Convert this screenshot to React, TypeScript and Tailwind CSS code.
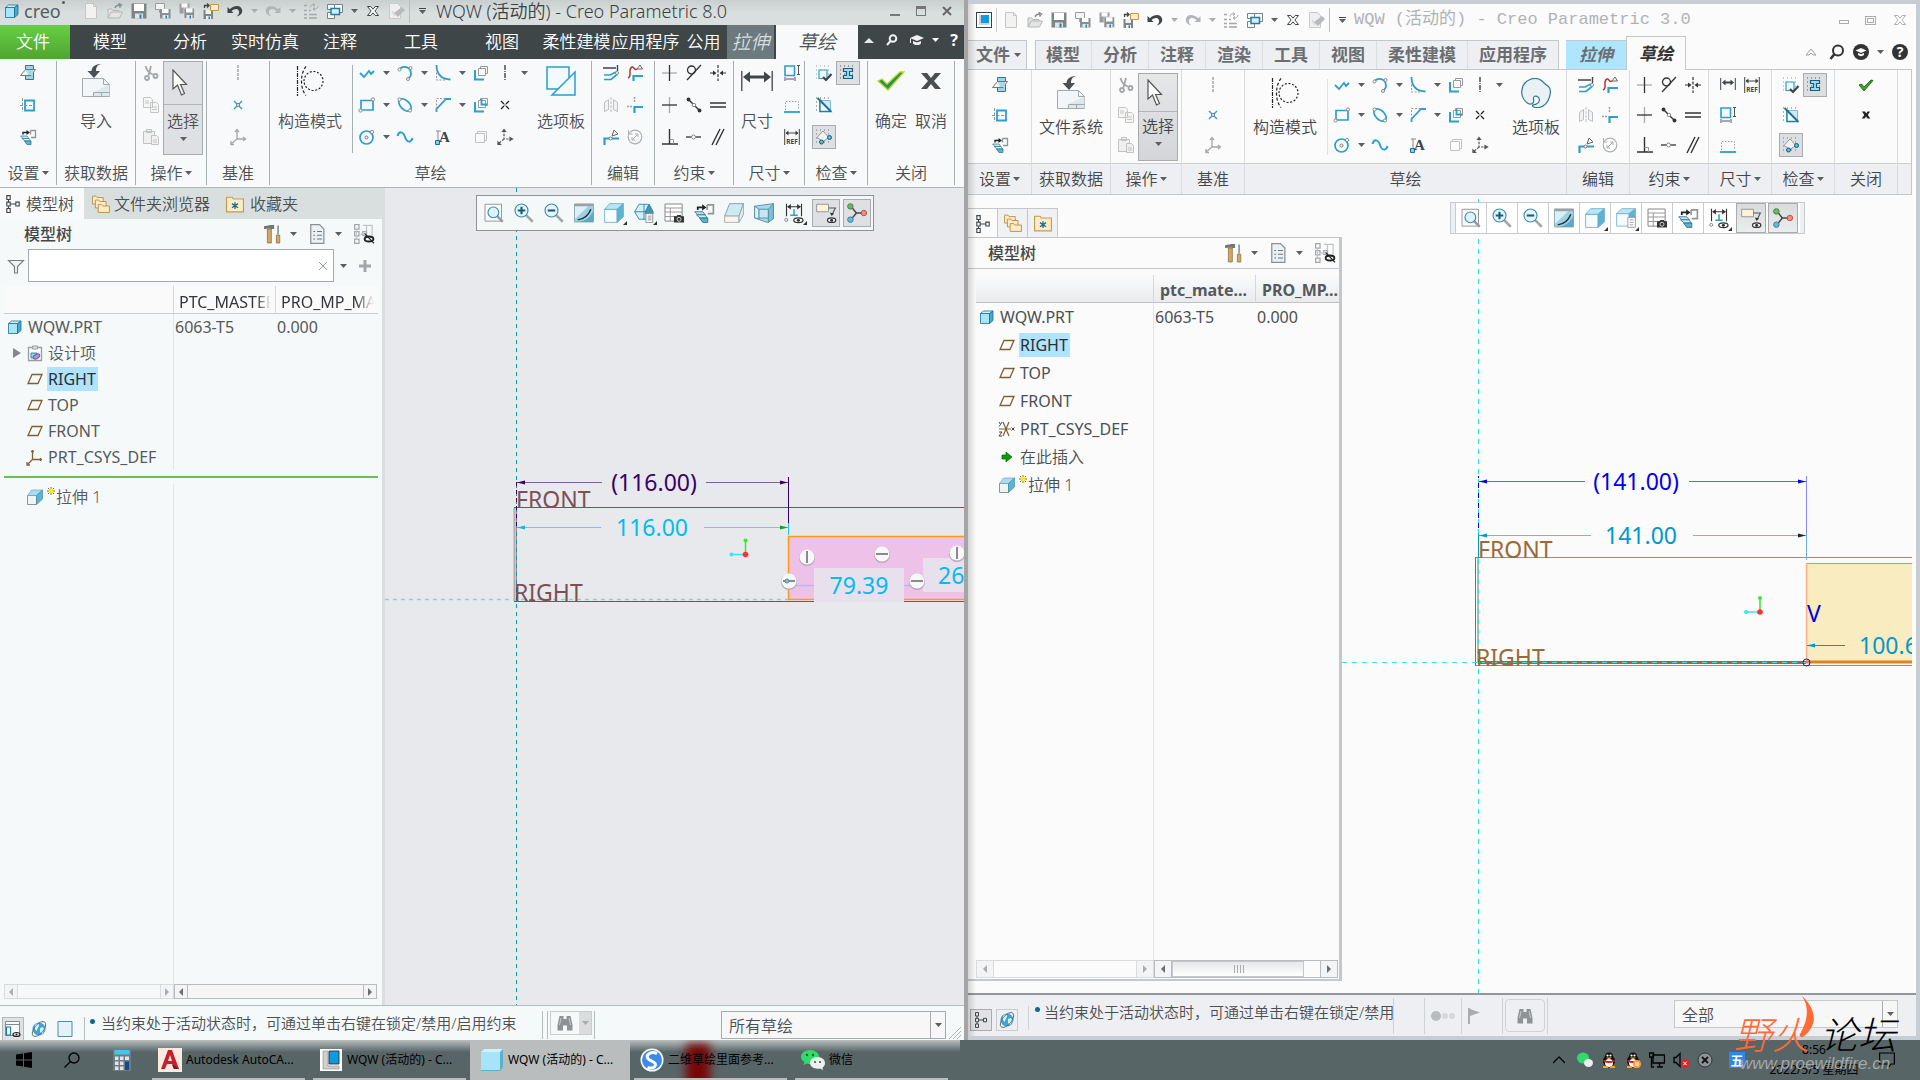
import type { ReactNode } from 'react';
import clsx from 'clsx';

type Variant = 'v8' | 'v3';

const BLUE = '#2a9fd0';
const GREY = '#a3a7aa';
const DARK = '#404548';

const sheet = 'M3 .5h7l3.500 3.500v11.500H3z';

const GLYPHS: Record<string, ReactNode> = {
  newFile: (
    <g>
      <path d="M2.500 .5h8l3 3v12h-11z" fill="#f2f2f0" stroke="#c4c6c6" />
      <path d="M10.500 .5v3h3" fill="none" stroke="#c4c6c6" />
    </g>
  ),
  open: (
    <g fill="#e4e4e2" stroke="#b4b7b8">
      <path d="M1 15v-9h4l1 1.500h6v2" />
      <path d="M1 15 4 9h11.500l-3 6z" />
      <path d="M8 5c1-2.500 3-3 5-2.500M11.500 .5l3 1.500-2 2.500" fill="none" stroke="#8a8d8f" strokeWidth="1.400" />
    </g>
  ),
  save: (
    <g>
      <path d="M.5.5h15v15H.5z" fill="#7e8385" />
      <path d="M3 1h10v7H3z" fill="#fff" />
      <path d="M4 10.500h8v5H4z" fill="#dfe5e8" />
      <path d="M8.500 11.500h2v4h-2z" fill="#227ea8" />
    </g>
  ),
  saveCopy: (
    <g>
      <path d="M.5 .5h9v6h-3l-2 3v-3h-4z" fill="#f4f4f4" stroke="#9a9d9f" />
      <path d="M5 6h10.500v9.500H5z" fill="#8b8f91" />
      <path d="M7 6h6.500v4H7z" fill="#fff" />
      <path d="M7.500 12h6v3.500h-6z" fill="#e5e9ea" />
      <path d="M10.500 12.500H12v3h-1.500z" fill="#227ea8" />
    </g>
  ),
  backup: (
    <g>
      <path d="M.5.5h10v10h-10z" fill="#9a9d9f" />
      <path d="M2.500.5h6v4h-6z" fill="#fff" />
      <path d="M5 5h10.500v10.500H5z" fill="#8b8f91" stroke="#f0f1f1" strokeWidth=".6" />
      <path d="M7 5.300h6.500v4.200H7z" fill="#fff" />
      <path d="M7.500 12h6v3.500h-6z" fill="#e5e9ea" />
      <path d="M10.500 12.500H12v3h-1.500z" fill="#227ea8" />
    </g>
  ),
  exportFile: (
    <g>
      <path d="M.5 7h9.500v9h-9.500z" fill="#7e8385" />
      <path d="M2.500 7h5.500v4h-5.500zM3 13h5v3H3z" fill="#eef1f2" />
      <path d="M5.500 13.500H7V16H5.500z" fill="#227ea8" />
      <path d="M7.500 1.500h8v6h-8z" fill="#fdeccb" stroke="#c8964a" />
      <path d="M1.500 5V2.500h4M4 .5l2 2-2 2" fill="none" stroke={DARK} strokeWidth="1.300" />
    </g>
  ),
  undo: (
    <path d="M.5 4v6h6l-2-2c2.500-2.500 6.500-3 7.500 0 .7 2-.5 4-2.500 5.500 4-1 6.500-3.500 5.500-7C13.500 2 7.500 2 2.800 6.300z" fill={DARK} />
  ),
  redo: (
    <path d="M15.500 4v6h-6l2-2C9 5.500 5 5 4 8c-.7 2 .5 4 2.500 5.500-4-1-6.500-3.500-5.500-7C2.500 2 8.500 2 13.200 6.300z" fill="#b2b6b8" />
  ),
  regen: (
    <g stroke={GREY} fill="none">
      <path d="M1 2.500h3M1 7.500h3M1 11.500h3M1 15h3M6 7.500h2M6 11.500h8M6 15h8" strokeWidth="1.500" />
      <path d="M7 4.500c0-2 2-3 4-2.500M10 .5l2 1.500-2 1.500M15 3c0 2-2 3.500-4 3M12 4.500l-2 1.500 2 1.500" />
    </g>
  ),
  windows: (
    <g fill="#f7f8f8" stroke="#7b8083">
      <path d="M5.500 1.500h10v8h-10z" />
      <path d="M.5 1.500h7v5h-7zM.5 9.500h7v6h-7z" />
      <path d="M4 5.500h8.500v6H4z" stroke="#1b7faa" strokeWidth="1.500" fill="#d6effa" />
    </g>
  ),
  closeX: (
    <path d="M2.500 3.500h3.300l2.200 2.700 2.200-2.700h3.300L9.900 8l3.600 4.500h-3.300L8 9.800l-2.200 2.700H2.500L6.100 8z" fill="#fff" stroke={DARK} />
  ),
  erase: (
    <g>
      <path d="M.5.5h8l3 3v12h-11z" fill="#eef0f0" stroke="#c9cbcb" />
      <path d="m5 10 8-6 3 3-7 7z" fill="#b6babc" />
      <path d="M3 8l3 5" stroke="#c9cbcb" />
    </g>
  ),
  refEdge: (
    <g>
      <path d="M5.500.5h8v14h-8z" fill="#9ed4e8" stroke="#2d7898" />
      <path d="M.5 10.500 5.500 4.500h10l-4.500 6z" fill="#f1f7fa" stroke="#70787c" />
      <path d="M6 5h7v5H8z" fill="#a9d8ea" />
    </g>
  ),
  plane: (
    <g fill="none">
      <path d="M5 3.500h9v10H5z" stroke={BLUE} strokeWidth="1.800" />
      <path d="M2.500 1v14M0 8.500h15" stroke="#8f9497" strokeDasharray="3 1.500" />
    </g>
  ),
  orient: (
    <g>
      <path d="M3 5.500V3.500h4" fill="none" stroke="#222" strokeWidth="1.400" />
      <path d="M6.500 1v5L10 3.500z" fill="#222" />
      <path d="M10.500 1.500h5v7h-4.500M10.500 1.500v4" fill="none" stroke="#8f9497" strokeWidth="1.300" />
      <path d="M.5 7h6.500l2 2.500H3z" fill="#bfe6f3" stroke="#2d7898" strokeWidth=".7" />
      <path d="M2 9.500h7l1.500 2.500H5z" fill="#d6f0f8" stroke="#2d7898" strokeWidth=".7" />
      <path d="M4.500 12h6.500v3.500H7z" fill="#5fb3d2" stroke="#1f6f93" strokeWidth=".7" />
    </g>
  ),
  cut: (
    <g fill="none" stroke={GREY} strokeWidth="1.800">
      <path d="M2.500 1c1 4 3 7 7.500 8.500M8 1 5.500 10.500" />
      <circle cx="4" cy="13" r="2" />
      <circle cx="12.500" cy="11" r="2" />
    </g>
  ),
  copy: (
    <g fill="#f5f5f4" stroke="#c4c6c6">
      <path d="M.5.5h7l2 2v8h-9zM7.500 5.500h6l2 2v8h-8z" />
      <path d="M2 4h4M2 6h4M9 10h5M9 12.500h5" />
    </g>
  ),
  paste: (
    <g fill="#f0f0ef" stroke="#c0c2c3">
      <path d="M.5 2.500h11v12H.5zM3.500.5h5v3h-5z" />
      <path d="M8.500 6.500h5l2 2v7h-7z" />
      <path d="M10 11h4M10 13h4" />
    </g>
  ),
  datumLine: <path d="M8 0v16" stroke={GREY} strokeWidth="1.500" strokeDasharray="3 1" />,
  datumPoint: (
    <g>
      <path d="m4 4 8 8M12 4l-8 8" stroke={BLUE} strokeWidth="1.400" />
      <circle cx="8" cy="8" r="1.500" fill="#fff" stroke="#777" />
    </g>
  ),
  csys: (
    <g fill="none" stroke={GREY} strokeWidth="1.300">
      <path d="M7 1v9h8M7 10l-6 5" />
      <path d="M5 3l2-2.500L9 3M13 8l2.500 2-2.500 2M1 12v3.500h3" />
    </g>
  ),
  csysBlack: (
    <g fill="none" stroke="#555" strokeWidth="1.200">
      <path d="M7 1v9h8M7 10l-6 5" strokeDasharray="2.500 1.200" />
      <path d="M5.500 2.500 7 .5l1.500 2zM13 8.500l2.500 1.500-2.500 1.500zM1 13v2.500h2.500z" fill="#555" />
    </g>
  ),
  line: <path d="m1 8 4 4 5-6 2 3 3-3" fill="none" stroke={BLUE} strokeWidth="1.800" />,
  arc: (
    <g fill="none">
      <path d="M2 5c3-5 12-4 12 4 0 2-1 3-2 4" stroke={BLUE} strokeWidth="1.800" />
      <circle cx="2.500" cy="4.500" r="1.500" fill="#fff" stroke="#888" />
      <circle cx="13.500" cy="3" r="1.500" fill="#fff" stroke="#888" />
      <circle cx="11" cy="14" r="1.500" fill="#fff" stroke="#888" />
    </g>
  ),
  fillet: (
    <g fill="none">
      <path d="M1.500 0c0 8 4 14 14 14.500" stroke={BLUE} strokeWidth="1.800" />
      <path d="M1.500 4v11H11" stroke="#999" strokeDasharray="2 1.500" />
    </g>
  ),
  rect: (
    <g>
      <path d="M2 3.500h12v9.500h-12z" fill="none" stroke={BLUE} strokeWidth="1.700" />
      <circle cx="14" cy="2.500" r="1.600" fill="#fff" stroke="#888" />
      <circle cx="1.500" cy="13.500" r="1.600" fill="#fff" stroke="#888" />
    </g>
  ),
  ellipse: (
    <g>
      <ellipse cx="8" cy="8" rx="7.500" ry="4.500" transform="rotate(45 8 8)" fill="none" stroke={BLUE} strokeWidth="1.700" />
      <circle cx="2.500" cy="2.500" r="1.600" fill="#fff" stroke="#888" />
      <circle cx="13" cy="13.500" r="1.600" fill="#fff" stroke="#888" />
    </g>
  ),
  chamfer: (
    <g fill="none">
      <path d="M1.500 15V12L11 2h5" stroke={BLUE} strokeWidth="1.800" />
      <path d="M1.500 12V1.500H11" stroke="#999" strokeDasharray="2 1.500" />
    </g>
  ),
  circle: (
    <g fill="none">
      <circle cx="7.500" cy="8.500" r="6.500" stroke={BLUE} strokeWidth="1.700" />
      <circle cx="7.500" cy="8.500" r="1.500" stroke="#777" />
      <circle cx="13" cy="3" r="1.600" fill="#fff" stroke="#888" />
    </g>
  ),
  spline: <path d="M.5 7C2 2 6 2 8 8s6 6 7.500 1" fill="none" stroke={BLUE} strokeWidth="2" />,
  text: (
    <g>
      <path d="M3 2v11M1 2h5" stroke="#888" fill="none" />
      <path d="M.5 11.500h4v4h-4z" fill="#7fd0f0" stroke="#1f6f93" />
      <text x="4" y="13" fontSize="15" fontWeight="700" fill={DARK} className="font-['Liberation_Serif',serif]">A</text>
    </g>
  ),
  offset: (
    <g fill="none">
      <path d="M2 5v9.500H11" stroke={BLUE} strokeWidth="2" />
      <path d="M5.500 3.500h7v7h-7zM7.500 3.500v-2h7v7h-2" stroke="#999" />
    </g>
  ),
  thicken: (
    <g fill="none">
      <path d="M2 5v9.500H11" stroke={BLUE} strokeWidth="2" />
      <path d="M5.500 3.500h7v7h-7zM7.500 3.500v-2h7v7h-2" stroke="#999" />
      <path d="M8.500 2v5.500H14" stroke={BLUE} strokeWidth="1.800" />
    </g>
  ),
  project: (
    <path d="M2.500 4.500h9v9h-9zM4.500 4.500v-2h9v9h-2" fill="none" stroke="#bfc2c4" />
  ),
  centerline: <path d="M8 0v16" stroke="#222" strokeWidth="1.200" strokeDasharray="5 1 1 1" />,
  point: <path d="m4 4 3 3M12 4 9 7M4 12l3-3M12 12 9 9M7.500 8h1" stroke="#222" strokeWidth="1.300" />,
  modify: (
    <g fill="none">
      <path d="M0 3h13M14.500 0v6" stroke={DARK} strokeWidth="1.400" />
      <path d="M1 10h6l6-3M1 14.500h7l6-5" stroke={BLUE} strokeWidth="1.700" />
      <circle cx="14" cy="8" r="1.500" fill="#fff" stroke="#888" />
    </g>
  ),
  deleteSeg: (
    <g fill="none">
      <path d="M1 13c5-2-1-8 4-11 2-1 2 4 5 2" stroke="#a33b33" strokeWidth="1.500" />
      <path d="M10 4l3-4 2.500 4z" stroke="#666" />
      <path d="M6.500 16V11H16" stroke={BLUE} strokeWidth="2.200" />
    </g>
  ),
  mirror: (
    <g fill="#f2f3f3" stroke="#bcbfc1">
      <path d="M1.500 5.500l4-3v10l-4 2zM14.500 5.500l-4-3v10l4 2z" />
      <path d="M8 0v16" strokeDasharray="3 1" />
    </g>
  ),
  corner: (
    <g fill="none">
      <path d="M7.500 0v6M0 9.500h5" stroke="#a0a0a0" strokeWidth="1.500" strokeDasharray="2 1" />
      <path d="M7.500 16V10H16" stroke={BLUE} strokeWidth="2.200" />
    </g>
  ),
  divide: (
    <g fill="none">
      <path d="M1.500 16V9.500H16" stroke={BLUE} strokeWidth="2.200" />
      <path d="M9 7l2-6 4 4z" stroke="#666" />
      <circle cx="7.500" cy="9.500" r="1.500" fill="#fff" stroke="#777" />
    </g>
  ),
  rotate: (
    <g fill="none" stroke="#adb0b2">
      <circle cx="8" cy="8" r="6.800" strokeWidth="1.200" />
      <path d="m5 11 6-6M5 8v3h3M8 5h3v3" />
      <path d="M1.500 1v4h4" />
    </g>
  ),
  vertical: (
    <g>
      <path d="M0 8h15" stroke="#aaa" strokeWidth="1.300" />
      <path d="M7.500 0v16" stroke="#333" strokeWidth="1.300" />
    </g>
  ),
  horizontal: (
    <g>
      <path d="M7.500 0v16" stroke="#aaa" strokeWidth="1.300" />
      <path d="M0 8h15" stroke="#333" strokeWidth="1.300" />
    </g>
  ),
  perp: (
    <g fill="none" stroke="#333" strokeWidth="1.400">
      <path d="M0 15h16M7.500 0v15" />
      <path d="M7.500 10.500h4V15" stroke="#999" strokeWidth="1" />
    </g>
  ),
  tangent: (
    <g fill="none" stroke="#333" strokeWidth="1.300">
      <circle cx="5.500" cy="5" r="4" />
      <path d="M1 15 15 0" />
    </g>
  ),
  midpoint: (
    <g>
      <path d="m2 2 12 12" stroke="#333" strokeWidth="1.400" />
      <circle cx="2.500" cy="2.500" r="1.900" fill="#333" />
      <circle cx="13.500" cy="13.500" r="1.900" fill="#333" />
      <circle cx="8" cy="8" r="1.700" fill="#fff" stroke="#888" />
    </g>
  ),
  coincident: (
    <g>
      <path d="M0 8h15" stroke="#333" strokeWidth="1.300" />
      <circle cx="7.500" cy="8" r="2" fill="#fff" stroke="#888" />
    </g>
  ),
  symmetric: (
    <g stroke="#333" strokeWidth="1.200">
      <path d="M8 0v16" strokeDasharray="3 1.500" />
      <path d="M0 8h5M11 8h5" />
      <path d="M3 5.500 6.500 8 3 10.500zM13 5.500 9.500 8l3.500 2.500z" fill="#333" stroke="none" />
    </g>
  ),
  equal: <path d="M0 6h16M0 10h16" stroke="#333" strokeWidth="1.300" />,
  parallel: <path d="M2 16 10 0M6 16 14 0" stroke="#333" strokeWidth="1.400" />,
  perimeter: (
    <g fill="none">
      <path d="M1 1h9.500v9.500H1z" stroke={BLUE} strokeWidth="1.600" />
      <path d="M13 .5h3M13 9.500h3M14.500 1v8M1 12v4M11 12v4M2 14h8" stroke="#555" />
    </g>
  ),
  baseline: (
    <g fill="none">
      <path d="M1.500 13V4.500h13V13" stroke="#999" strokeDasharray="1.500 1.500" />
      <path d="M0 15h16" stroke={BLUE} strokeWidth="1.800" />
    </g>
  ),
  refDim: (
    <g>
      <path d="M.7 0v16M15.300 0v16M2 4h12" stroke="#444" />
      <path d="M4.500 1.500 1.500 4l3 2.500zM11.500 1.500l3 2.500-3 2.500z" fill="#444" />
      <text x="8" y="14.500" fontSize="6.500" fontWeight="700" textAnchor="middle" fill="#444">REF</text>
    </g>
  ),
  dimSmall: (
    <g fill={DARK}>
      <path d="M.7 1v12M15.300 1v12" stroke={DARK} />
      <path d="M5.500 2.500 2 5.500l3.500 3v-2h5v2l3.500-3-3.500-3v2h-5z" />
    </g>
  ),
  gridCheck: (
    <g fill="none">
      <path d="M0 1h16M0 5h16M0 9h16M0 13h16" stroke="#999" strokeDasharray="1 3" />
      <path d="M3 5h8v8.500H3z" stroke={BLUE} fill="#f4fafd" strokeWidth="1.200" />
      <path d="m7 12 3 3 5.500-6" stroke={DARK} strokeWidth="2.200" />
    </g>
  ),
  gridI: (
    <g>
      <path d="M0 1h16M0 5h16M0 9h16M0 13h16" stroke="#555" strokeDasharray="1 3" />
      <path d="M3.500 3.500h9v3h-3v4h3v3h-9v-3h3v-4h-3z" fill="#9fdcf2" stroke="#155e7d" strokeWidth="1.200" />
    </g>
  ),
  gridTri: (
    <g>
      <path d="M0 1h16M0 5h16M0 9h16M0 13h16" stroke="#666" strokeDasharray="1 3" />
      <path d="M3.500 3.500h11v11h-11z" fill="#cfe9f4" stroke="#7db9d2" />
      <path d="M4 3v11.500h11z" fill="#f8fbfd" stroke="#1b7faa" strokeWidth="1.300" />
      <path d="M1.500 1 15 14.500" stroke="#1f6f93" strokeWidth="1.800" />
    </g>
  ),
  gridShape: (
    <g>
      <path d="M0 1h16M0 5h16M0 9h16M0 13h16" stroke="#777" strokeDasharray="1 3" />
      <path d="M1 8.500 7 2l6 6.500-6 4z" fill="#f1f1f1" stroke="#999" />
      <circle cx="13.500" cy="8.500" r="2" fill="#52bfe8" stroke="#155e7d" />
      <circle cx="5.500" cy="13" r="2" fill="#52bfe8" stroke="#155e7d" />
    </g>
  ),
  okSmall: <path d="m1 8 2.500-1 2.500 3L13 3l2 .5L6 14z" fill="#2fae1e" stroke="#23480f" strokeWidth=".8" />,
  xSmall: <path d="M4 4.500h3l1.200 2 1.300-2H12L9.800 8l2.500 3.500H9.500L8 9.500l-1.500 2H3.700L6.300 8z" fill="#222" />,
  cube: (
    <g stroke="#1b6e93" strokeWidth=".8">
      <path d="M1.500 4.500h9v10h-9z" fill="#a8e4fa" />
      <path d="m1.500 4.500 3-2.500h9.500l-3.500 2.500z" fill="#d5f3ff" />
      <path d="M10.500 4.500 14 2v9.500l-3.500 3z" fill="#49a9cc" />
    </g>
  ),
  datum: <path d="M5 3.500h10l-4 9H1z" fill="none" stroke="#7d6230" strokeWidth="1.300" />,
  design: (
    <g>
      <path d="M1.500 2.500h13v13h-13z" fill="#fafafa" stroke="#9a9d9f" strokeWidth="1.300" />
      <path d="M5.500 1h5v3h-5z" fill="#ddd" stroke="#9a9d9f" />
      <path d="M4 8h6v5H4z" fill="#8fd3ea" stroke="#3c8cab" />
      <ellipse cx="9.500" cy="11.500" rx="3.500" ry="2" transform="rotate(-30 9.500 11.500)" fill="#b79bd6" stroke="#7a55a8" />
    </g>
  ),
  csysTree: (
    <g fill="none" stroke="#7d6230" strokeWidth="1.300">
      <path d="M5.500 1v9.500H15M5.500 10.500l-5 5" />
      <path d="M4 2.500h3M13.500 9v3M0 13v3h3" />
    </g>
  ),
  csysOld: (
    <g fill="none" stroke="#7d6230" strokeWidth="1.200">
      <path d="M0 8h12M4 1l6 14M10 1 4 15" />
      <path d="m0 1 1.500 2.500L3 1M1.500 3.500 0 5.500M0 11h3l-3 4h3M12.500 6.500l3 3M15.500 6.500l-3 3" stroke="#444" strokeWidth="1" />
    </g>
  ),
  insertHere: <path d="M3 6h4V3l6 5-6 5v-3H3z" fill="#0a9a0a" stroke="#0b5c0b" strokeWidth=".7" />,
  extrude: (
    <g>
      <path d="M.5 6.500h9v9h-9z" fill="#f1f3f4" stroke="#8f9497" />
      <path d="m.5 6.500 4-5.500h11l-6 5.500z" fill="#a8dcee" stroke="#6aa7bf" strokeWidth=".7" />
      <path d="m9.500 6.500 6-5.500v9l-6 5.500z" fill="#5fb3d2" stroke="#3c8cab" strokeWidth=".7" />
    </g>
  ),
  tree: (
    <g fill="none" stroke={DARK}>
      <path d="M2.500 .5h3v3.500h-3zM2.500 6.300h3v3.500h-3zM2.500 12h3v3.500h-3zM10.500 6.300h3v3.500h-3z" />
      <path d="M4 4v2.500M4 10v2M5.500 8h5" />
    </g>
  ),
  folders: (
    <g fill="#fdecc8" stroke="#b98d45" strokeWidth=".8">
      <path d="M.5 8V1h3l1 1.300h5.500V8z" />
      <path d="M3 11.500V4.500h3l1 1.300h5.500v5.700z" />
      <path d="M5.500 15.500V8.500h3l1 1.300h6v5.700z" />
    </g>
  ),
  favorite: (
    <g>
      <path d="M.5 15v-13h5l1 1.500h9v11.500z" fill="#fdecc8" stroke="#c49a55" />
      <path d="M8 6.500v6M5.300 7.700l5.400 3.600M10.700 7.700l-5.400 3.600" stroke="#1d6f96" strokeWidth="1.200" />
    </g>
  ),
  tools: (
    <g>
      <path d="M0 1 6 0h3v3.500H6.500l-1-.5L0 3.500z" fill="#70767a" />
      <path d="M3 3.500h3.500V16H3z" fill="#d3a765" stroke="#80602c" strokeWidth=".6" />
      <path d="M12.500.5v8" stroke="#8f9497" strokeWidth="1.500" />
      <path d="M11 9h3v7h-3z" fill="#d3a765" stroke="#80602c" strokeWidth=".6" />
    </g>
  ),
  listDoc: (
    <g>
      <path d={sheet} fill="#eaf1f4" stroke="#8b9295" />
      <path d="M5 6h1.500M5 9h1.500M5 12h1.500M8 6h4M8 9h4M8 12h4" stroke="#777" strokeWidth=".9" />
    </g>
  ),
  columnsHide: (
    <g fill="none">
      <path d="M.5.5H4V4H.5zM.5 6H4v3.500H.5zM.5 12H4v3.500H.5zM7 6h3v3H7z" stroke={GREY} />
      <path d="M2 4v8M4 8h3M7 1h8M10 1v5M14.500 1v8" stroke="#c3c6c8" />
      <ellipse cx="12" cy="12" rx="3.500" ry="2" stroke="#222" strokeWidth="1.500" />
      <path d="m8.500 7.500 7.500 8" stroke="#222" />
    </g>
  ),
  funnel: <path d="M.5 2.500h15l-6 6v6.500h-3V8.500z" fill="#f0f2f3" stroke="#777c7f" strokeWidth="1.100" />,
  refit: (
    <g>
      <path d="M.8 1h13.200v13.500H.8z" fill="#f8fbfc" stroke="#999" strokeWidth=".8" />
      <path d="m10.500 10.500 4.500 4.500" stroke="#9a9d9f" strokeWidth="2" />
      <circle cx="7.500" cy="7.500" r="4.300" fill="#dff2fa" stroke="#3c8cab" strokeWidth=".9" />
    </g>
  ),
  zoomIn: (
    <g>
      <path d="m9.500 9.500 5.500 5.500" stroke="#a3a6a8" strokeWidth="2" />
      <circle cx="6" cy="6" r="5.200" fill="#e5f5fb" stroke="#3c8cab" strokeWidth=".9" />
      <path d="M3 6h6M6 3v6" stroke="#155e7d" strokeWidth="1.700" />
    </g>
  ),
  zoomOut: (
    <g>
      <path d="m9.500 9.500 5.500 5.500" stroke="#a3a6a8" strokeWidth="2" />
      <circle cx="6" cy="6" r="5.200" fill="#e5f5fb" stroke="#3c8cab" strokeWidth=".9" />
      <path d="M3 6h6" stroke="#155e7d" strokeWidth="1.700" />
    </g>
  ),
  repaint: (
    <g>
      <path d="M.4.8h15.200v14.400H.4z" fill="#9fd0e2" />
      <path d="M.4 2.500h11L.4 13z" fill="#dceff6" />
      <path d="M15.600 6v9.200H4c5-1 9.500-4 11.600-9.200z" fill="#5ba9c6" />
      <path d="M3 13.500c4.500-.5 8.500-3.500 10.500-8.500" stroke="#1a2b33" fill="none" strokeWidth="1.100" />
      <path d="M.4.8h15.200v14.400H.4z" fill="none" stroke="#7f999f" strokeWidth=".6" />
      <path d="M.4.6h15.200v1.900H.4z" fill="#9aa0a3" />
    </g>
  ),
  shaded: (
    <g strokeWidth=".6" stroke="#5aa6c2">
      <path d="M.5 5h10v10.500H.5z" fill="#f7fcfe" />
      <path d="m.5 5 4-4.500h11L10.500 5z" fill="#b9e6f6" />
      <path d="m10.500 5 5-4.500V11l-5 4.500z" fill="#5fb3d2" />
    </g>
  ),
  hexShape: (
    <g strokeWidth=".7" stroke="#2d84a8">
      <path d="M.5 7 4 1h7l3.500 6-3.500 6H4z" fill="#d3f0fa" />
      <path d="M9 7 12 .8 15.300 7v1.500H9z" fill="#3f94b5" />
      <path d="M.5 7h9M8 1v12" fill="none" />
      <path d="M9.500 8.500h5.500v7H9.500z" fill="#fff" stroke="#888" />
      <path d="M11 10.500h3M11 12h3M11 13.500h3" stroke="#888" />
    </g>
  ),
  savedView: (
    <g strokeWidth=".6" stroke="#6aaac2">
      <path d="M.5 4.500h10v10H.5z" fill="#f4fafd" />
      <path d="m.5 4.500 4-4h11l-5 4z" fill="#b9e6f6" />
      <path d="m10.500 4.500 5-4v8l-5 4z" fill="#5fb3d2" />
      <path d="M9.500 7.500h6v8h-6z" fill="#fff" stroke="#888" />
      <path d="M11 9.500h3M11 11.500h3M11 13.500h3" stroke="#888" />
    </g>
  ),
  viewMgr: (
    <g>
      <path d="M.8.8h13.700v13.700H.8z" fill="#fff" stroke="#888" strokeWidth=".8" />
      <path d="M.8 4h13.700M.8 7.200h13.700M.8 10.800h13.700M5 4v10.500" stroke="#999" strokeWidth=".8" />
      <path d="M8 10.500h2l.7-1h2.600l.7 1h2v5H8z" fill="#333" />
      <circle cx="12" cy="13" r="1.600" fill="#333" stroke="#fff" strokeWidth=".6" />
    </g>
  ),
  section: (
    <g>
      <path d="m.5 10.500 4-10h11l-3.500 10z" fill="#cdeaf3" stroke="#7c9ba8" strokeWidth=".7" />
      <path d="M.5 10.500h11.500v5H.5z" fill="#f7f4f1" stroke="#b5aaa4" strokeWidth=".7" />
      <path d="m12 10.500 3.500-10v9l-3.500 6z" fill="#e1ecef" stroke="#8fa5ad" strokeWidth=".7" />
    </g>
  ),
  perspective: (
    <g strokeWidth=".7" stroke="#4c8ca5">
      <path d="M.5 2.500 15.500.5v12l-5 3L.5 12z" fill="#a9d8e8" />
      <path d="M.5 2.500 4 5v7.500L.5 12z" fill="#e3f3f8" />
      <path d="M4 5h7.500v7H4z" fill="#c9e7f1" />
      <path d="M11.500 5l4-4.500v12l-4 3z" fill="#7fbfd6" />
    </g>
  ),
  dimDisplay: (
    <g>
      <path d="M2 .5v10M14 .5v10M3 3h10" stroke="#333" strokeWidth=".9" />
      <path d="M5.500.8 2.500 3l3 2.200zM10.500.8l3 2.200-3 2.200z" fill="#333" />
      <path d="M8 5v4.500M5 9.700h6" stroke={BLUE} strokeWidth="1.200" />
      <circle cx="1.800" cy="13.500" r="1.200" fill="none" stroke="#888" strokeWidth=".8" />
      <ellipse cx="11.500" cy="13.700" rx="3.700" ry="1.900" fill="#fff" stroke="#333" />
      <circle cx="11.500" cy="13.700" r="1.200" fill="#333" />
    </g>
  ),
  annoDisplay: (
    <g>
      <path d="M.5 1h9.500v6h-9.500z" fill="#fdf3d8" stroke="#999" strokeWidth=".8" />
      <path d="M10 4h5.500l-2.500 5" fill="none" stroke="#555" strokeWidth=".9" />
      <path d="m11 7.500 1.500 2.800 2-2z" fill="#333" />
      <ellipse cx="12.500" cy="13.700" rx="3.300" ry="1.800" fill="#fff" stroke="#333" />
      <circle cx="12.500" cy="13.700" r="1.200" fill="#333" />
    </g>
  ),
  spin: (
    <g>
      <path d="M3 2.500 7.500 8 3 13.500M7.500 8H13" fill="none" stroke="#444" strokeWidth="1.200" />
      <circle cx="2.700" cy="2.700" r="2.200" fill="#6db568" stroke="#3f7a3b" strokeWidth=".7" />
      <circle cx="2.700" cy="13.300" r="2.200" fill="#6fb7d6" stroke="#2d7898" strokeWidth=".7" />
      <circle cx="13.500" cy="8" r="2.200" fill="#f28b82" stroke="#b04a42" strokeWidth=".7" />
    </g>
  ),
  globe: (
    <g>
      <circle cx="8" cy="8" r="6.500" fill="#3aa5d6" />
      <path d="M5 3c2-1 3 0 3 1.500S6 7 6 10c-2-1-3.500-4-1-7zM9 7l3-1 1.500 3-2.500 4-2-2z" fill="#d9f0fa" />
      <ellipse cx="8" cy="8" rx="9" ry="4.500" transform="rotate(-50 8 8)" fill="none" stroke="#666" strokeWidth=".9" />
    </g>
  ),
  paneToggle: (
    <g>
      <path d="M.5.5h14v14H.5z" fill="#f8fafb" stroke="#888" />
      <path d="M.5 3.500h14" stroke="#888" />
      <path d="M1.500 6h4v8h-4z" fill="#fff" stroke="#1b7faa" strokeWidth="1.200" />
      <ellipse cx="11.500" cy="13.500" rx="3.500" ry="2" fill="#ddd" stroke="#222" strokeWidth="1.200" />
      <circle cx="11.500" cy="13.500" r="1" fill="#222" />
    </g>
  ),
  screen: <path d="M1 .5h14v15H1z" fill="#e3f2f8" stroke="#4c8ca5" />,
  binoculars: (
    <g fill="#8e9294">
      <path d="M2.500 1h4v3h3V1h4l2 9v5.500h-5.500v-5h-4v5H.5V10z" />
      <path d="M4 3 2.500 10M12 3l1.500 7" stroke="#c9cccd" fill="none" />
    </g>
  ),
};

function Icon({ name, className = 'size-4' }: { name: string; className?: string }) {
  return (
    <svg viewBox="0 0 16 16" className={clsx('shrink-0 overflow-visible', className)} aria-hidden="true">
      {GLYPHS[name]}
    </svg>
  );
}

function Caret({ light = false, white = false }: { light?: boolean; white?: boolean }) {
  return (
    <svg viewBox="0 0 7 4" className="h-1 w-[7px] shrink-0" aria-hidden="true">
      <path d="M0 0h7L3.500 4z" fill={white ? '#fff' : light ? '#a9adaf' : '#5a5f61'} />
    </svg>
  );
}

function IconButton({ name, className, icon }: { name: string; className?: string; icon?: string }) {
  return (
    <button type="button" aria-label={name} className={clsx('flex items-center justify-center', className)}>
      <Icon name={name} className={icon} />
    </button>
  );
}

/* Quick access bar */

const QUICK: { icon: string; menu?: 'dark' | 'light' }[] = [
  { icon: 'newFile' },
  { icon: 'open' },
  { icon: 'save' },
  { icon: 'saveCopy' },
  { icon: 'backup' },
  { icon: 'exportFile' },
  { icon: 'undo', menu: 'light' },
  { icon: 'redo', menu: 'light' },
  { icon: 'regen' },
  { icon: 'windows', menu: 'dark' },
  { icon: 'closeX' },
  { icon: 'erase' },
];

function QuickAccess() {
  return (
    <div className="flex h-full items-center">
      {QUICK.map(({ icon, menu }) => (
        <div key={icon} className="flex items-center">
          <IconButton name={icon} className="h-6 w-6" />
          {menu ? (
            <button type="button" aria-label={`${icon} menu`} className="flex h-6 w-3.5 items-center justify-center">
              <Caret light={menu === 'light'} />
            </button>
          ) : null}
        </div>
      ))}
      <span className="h-6 w-px bg-[#b9bfc0]" />
      <button type="button" aria-label="customize" className="flex h-6 w-6 flex-col items-center justify-center gap-px">
        <span className="h-px w-[7px] bg-[#404548]" />
        <Caret />
      </button>
    </div>
  );
}

/* Ribbon */

function IconGrid({ cols, variant, children }: { cols: string; variant: Variant; children: ReactNode }) {
  return (
    <div className={clsx('grid auto-rows-[28px] content-start', cols, variant === 'v8' ? 'gap-y-1' : 'gap-y-0.5')}>
      {children}
    </div>
  );
}

function Group({ variant, label, menu, width, children }: {
  variant: Variant;
  label: string;
  menu?: boolean;
  width: string;
  children: ReactNode;
}) {
  return (
    <>
      <section className={clsx('flex shrink-0 flex-col', width)}>
        <div className={clsx('flex justify-center', variant === 'v8' ? 'h-[100px]' : 'h-[93px] pt-px')}>{children}</div>
        <div
          className={clsx(
            'flex items-center justify-center gap-0.5 whitespace-nowrap text-base leading-6',
            variant === 'v8' ? 'h-7' : 'h-[31px] border-t border-[#c9cccf] bg-[#eeeff2]',
          )}
        >
          {label}
          {menu ? <Caret /> : null}
        </div>
      </section>
      <span className={clsx('w-px shrink-0', variant === 'v8' ? 'my-0.5 bg-[#a9b0b3]' : 'bg-[#d9dcdf]')} />
    </>
  );
}

function BigButton({ variant, label, width, children }: {
  variant: Variant;
  label: string;
  width: string;
  children: ReactNode;
}) {
  return (
    <button type="button" className={clsx('flex shrink-0 flex-col items-center', width)}>
      <span className="flex h-11 items-center">{children}</span>
      <span className={clsx('whitespace-nowrap text-base leading-6', variant === 'v8' && 'mt-1.5')}>{label}</span>
    </button>
  );
}

function SelectButton({ variant }: { variant: Variant }) {
  return (
    <button
      type="button"
      className={clsx(
        'flex w-10 shrink-0 flex-col items-center border border-[#a9acae]',
        variant === 'v8' ? 'mt-0.5 h-[94px] bg-[#dfe0e3]' : 'mt-0.5 h-[88px] bg-linear-to-b from-[#e6e7e9] to-[#d3d5d8]',
      )}
    >
      <span className={clsx('flex w-full items-center border-b border-[#b4b7b9] pl-2', variant === 'v8' ? 'h-[43px]' : 'h-[38px]')}>
        <svg viewBox="0 0 16 28" className="h-7 w-4" aria-hidden="true">
          <path d="M1 1v19l4.500-4 4 10 3-1.500-4-9h6z" fill="#fff" stroke="#555" strokeWidth="1.200" />
        </svg>
      </span>
      <span className={clsx('text-base leading-6', variant === 'v8' ? 'mt-1' : 'mt-0.5')}>选择</span>
      <span className="mt-1"><Caret /></span>
    </button>
  );
}

function ImportGlyph() {
  return (
    <svg viewBox="0 0 28 34" className="h-[34px] w-7" aria-hidden="true">
      <path d="M.5 14.500h21l6 6v12H.5z" fill="#f3f6f8" stroke="#a3a8ab" />
      <path d="M12 28l16-8v12H12z" fill="#cfdde5" opacity=".6" />
      <path d="M11.500 32.500v-4h16M19.500 28.500v4M21.500 14.500v6h6" fill="none" stroke="#a3a8ab" />
      <path d="M19 0c-5 0-9 2-9.500 7H5.500l6.500 7 6-7h-4c0-3 1-6 5-7z" fill="#4a5053" />
    </svg>
  );
}

function ConstructGlyph() {
  return (
    <svg viewBox="0 0 28 30" className="h-[30px] w-7" aria-hidden="true" fill="none" stroke="#222" strokeWidth="1.200">
      <path d="M1.500 0v30" strokeDasharray="4 1 1 1" />
      <path d="M10 .5c-6 7-6 22 0 29" strokeDasharray="3 2" />
      <circle cx="17.500" cy="15" r="9.500" strokeDasharray="2 1.700" />
    </svg>
  );
}

function PaletteGlyph({ variant }: { variant: Variant }) {
  if (variant === 'v8') {
    return (
      <svg viewBox="0 0 30 30" className="size-[30px]" aria-hidden="true" fill="#f3fafd" stroke={BLUE} strokeWidth="1.500">
        <path d="M1 1h22v22H1z" />
        <path d="M29 6v23H6z" />
      </svg>
    );
  }
  return (
    <svg viewBox="0 0 30 30" className="size-[30px]" aria-hidden="true">
      <path
        d="M9 1.500c4-1.500 9-1 12 1.500 2 2 4 4 6 5 2.500 2 3 6 1.500 11-1.500 5-5.500 9.500-10.500 10.500-4 .5-6.500-.5-6.500-2 0-1.500 2-.5 4-1.500 3-1.500 4-5 1.500-7s-5-.5-4.500 2 0 4.500-2.500 5-5-2-7-4.500C1 18.500 0 16 1 12 1.500 7 5 3 9 1.500z"
        fill="#e9f1f5"
        stroke="#2d7898"
        strokeWidth="1.200"
      />
    </svg>
  );
}

function DimGlyph() {
  return (
    <svg viewBox="0 0 32 20" className="h-5 w-8" aria-hidden="true">
      <path d="M.8 0v20M31.200 0v20" stroke={DARK} strokeWidth="1.300" />
      <path d="M9 .5 2 6l7 5.500v-4h14v4L30 6 23 .5v4H9z" fill={DARK} />
    </svg>
  );
}

const SKETCH_TOOLS: [string, boolean][] = [
  ['line', true], ['arc', true], ['fillet', true], ['offset', false], ['centerline', true],
  ['rect', true], ['ellipse', true], ['chamfer', true], ['thicken', false], ['point', false],
  ['circle', true], ['spline', false], ['text', false], ['project', false], ['csysBlack', false],
];

function SketchTools({ variant }: { variant: Variant }) {
  return (
    <IconGrid variant={variant} cols="grid-cols-[24px_14px_24px_14px_24px_14px_24px_24px_14px]">
      {SKETCH_TOOLS.map(([icon, menu], i) => (
        <div key={icon} className="contents">
          <IconButton name={icon} />
          {i % 5 === 3 ? null : <span className="flex items-center justify-center">{menu ? <Caret /> : null}</span>}
        </div>
      ))}
    </IconGrid>
  );
}

function CheckTools({ variant }: { variant: Variant }) {
  const pressed = clsx('my-0.5 border border-[#a9acae]', variant === 'v8' ? 'bg-[#dfe0e3]' : 'bg-[#dcdee1]');

  return (
    <IconGrid variant={variant} cols="grid-cols-[24px_24px]">
      <IconButton name="gridCheck" />
      <IconButton name="gridI" className={pressed} />
      <IconButton name="gridTri" />
      <span />
      <IconButton name="gridShape" className={pressed} />
    </IconGrid>
  );
}

function Column({ variant, icons, cols = 'grid-cols-[24px]' }: { variant: Variant; icons: string[]; cols?: string }) {
  return (
    <IconGrid variant={variant} cols={cols}>
      {icons.map((icon) => <IconButton key={icon} name={icon} />)}
    </IconGrid>
  );
}

function Ribbon({ variant }: { variant: Variant }) {
  const v8 = variant === 'v8';

  return (
    <div
      className={clsx(
        'flex shrink-0 overflow-hidden border-b',
        v8 ? 'border-[#aeb8bb] bg-[#f7f9fb] text-[#4b5052]' : 'mr-1 border-r border-[#c5c8cb] bg-[#fbfbfb] text-[#44474a]',
      )}
    >
      <Group variant={variant} label="设置" menu width={v8 ? 'w-[56px]' : 'w-[63px]'}>
        <Column variant={variant} icons={['refEdge', 'plane', 'orient']} />
      </Group>
      <Group variant={variant} label="获取数据" width="w-[78px]">
        <BigButton variant={variant} label={v8 ? '导入' : '文件系统'} width="w-full">
          <ImportGlyph />
        </BigButton>
      </Group>
      <Group variant={variant} label="操作" menu width="w-[70px]">
        <Column variant={variant} icons={['cut', 'copy', 'paste']} />
        <SelectButton variant={variant} />
      </Group>
      <Group variant={variant} label="基准" width="w-[62px]">
        <Column variant={variant} icons={['datumLine', 'datumPoint', 'csys']} />
      </Group>
      <Group variant={variant} label="草绘" width="w-[321px]">
        <BigButton variant={variant} label="构造模式" width="w-20">
          <ConstructGlyph />
        </BigButton>
        <span className={clsx('mx-0.5 w-px shrink-0', v8 ? 'my-1.5 bg-[#a9b0b3]' : 'my-2 bg-[#dfe1e3]')} />
        <SketchTools variant={variant} />
        <BigButton variant={variant} label="选项板" width="w-[60px]">
          <PaletteGlyph variant={variant} />
        </BigButton>
      </Group>
      <Group variant={variant} label="编辑" width="w-[62px]">
        <Column
          variant={variant}
          cols="grid-cols-[24px_24px]"
          icons={['modify', 'deleteSeg', 'mirror', 'corner', 'divide', 'rotate']}
        />
      </Group>
      <Group variant={variant} label="约束" menu width="w-[78px]">
        <Column
          variant={variant}
          cols="grid-cols-[24px_24px_24px]"
          icons={['vertical', 'tangent', 'symmetric', 'horizontal', 'midpoint', 'equal', 'perp', 'coincident', 'parallel']}
        />
      </Group>
      <Group variant={variant} label="尺寸" menu width={v8 ? 'w-[70px]' : 'w-[62px]'}>
        {v8 ? (
          <>
            <BigButton variant={variant} label="尺寸" width="w-[46px]">
              <DimGlyph />
            </BigButton>
            <Column variant={variant} icons={['perimeter', 'baseline', 'refDim']} />
          </>
        ) : (
          <IconGrid variant={variant} cols="grid-cols-[24px_24px]">
            <IconButton name="dimSmall" />
            <IconButton name="refDim" />
            <IconButton name="perimeter" />
            <span />
            <IconButton name="baseline" />
          </IconGrid>
        )}
      </Group>
      <Group variant={variant} label="检查" menu width="w-[62px]">
        <CheckTools variant={variant} />
      </Group>
      <Group variant={variant} label="关闭" width={v8 ? 'w-[86px]' : 'w-[62px]'}>
        {v8 ? (
          <>
            <BigButton variant={variant} label="确定" width="w-10">
              <svg viewBox="0 0 28 20" className="h-5 w-7" aria-hidden="true">
                <path d="m1 10 4-2 5 5L23 1h4L11 19z" fill="#2b8f5f" stroke="#b9dc1e" strokeWidth="1.300" />
              </svg>
            </BigButton>
            <BigButton variant={variant} label="取消" width="w-10">
              <svg viewBox="0 0 20 18" className="h-[18px] w-5" aria-hidden="true">
                <path d="M0 1h6l4 5 4-5h6l-7 8 7 8h-6l-4-5-4 5H0l7-8z" fill="#4a4e51" />
              </svg>
            </BigButton>
          </>
        ) : (
          <Column variant={variant} icons={['okSmall', 'xSmall']} />
        )}
      </Group>
      <div className="flex flex-1 flex-col justify-end">
        {v8 ? null : <div className="h-[31px] border-t border-[#c9cccf] bg-[#eeeff2]" />}
      </div>
    </div>
  );
}

/* Model tree */

interface TreeRow {
  icon: string;
  label: string;
  depth: number;
  selected?: boolean;
  expandable?: boolean;
  fresh?: boolean;
  cjk?: boolean;
}

const ROWS_V8: TreeRow[] = [
  { icon: 'design', label: '设计项', depth: 1, expandable: true, cjk: true },
  { icon: 'datum', label: 'RIGHT', depth: 1, selected: true },
  { icon: 'datum', label: 'TOP', depth: 1 },
  { icon: 'datum', label: 'FRONT', depth: 1 },
  { icon: 'csysTree', label: 'PRT_CSYS_DEF', depth: 1 },
];

const ROWS_V3: TreeRow[] = [
  { icon: 'datum', label: 'RIGHT', depth: 1, selected: true },
  { icon: 'datum', label: 'TOP', depth: 1 },
  { icon: 'datum', label: 'FRONT', depth: 1 },
  { icon: 'csysOld', label: 'PRT_CSYS_DEF', depth: 1 },
  { icon: 'insertHere', label: '在此插入', depth: 1, cjk: true },
];

const EXTRUDE: TreeRow = { icon: 'extrude', label: '拉伸 1', depth: 1, fresh: true, cjk: true };

function TreeTableRow({ row, height, values }: { row: TreeRow; height: string; values?: [string, string] }) {
  return (
    <tr className={height}>
      <td className="border-r border-[#e3e6e8] p-0">
        <div className={clsx('flex h-full items-center', row.depth === 0 ? 'pl-[3px]' : 'pl-[5px]')}>
          {row.depth === 1 ? (
            <span className="flex w-[18px] pl-1">
              {row.expandable ? (
                <svg viewBox="0 0 8 10" className="h-2.5 w-2"><path d="M0 0v10l8-5z" fill="#85898b" /></svg>
              ) : null}
            </span>
          ) : null}
          <Icon name={row.icon} />
          {row.fresh ? (
            <svg viewBox="0 0 8 8" className="mb-3 ml-1 size-2" aria-hidden="true">
              <path d="M4 0v8M0 4h8M1 1l6 6M7 1 1 7" stroke="#444" strokeWidth=".8" />
              <circle cx="4" cy="4" r="2.400" fill="#ffee00" />
            </svg>
          ) : null}
          <span
            className={clsx(
              'whitespace-nowrap leading-6',
              row.fresh ? 'px-px' : 'ml-1 px-px',
              row.cjk && 'font-[350]',
              row.selected && 'bg-[#afe3ff] pr-0.5 text-[#2b2f31]',
            )}
          >
            {row.label}
          </span>
        </div>
      </td>
      <td className="p-0 pl-px">{values?.[0]}</td>
      <td className="p-0 pl-px">{values?.[1]}</td>
    </tr>
  );
}

function TreeTable({ variant }: { variant: Variant }) {
  const v8 = variant === 'v8';
  const height = v8 ? 'h-[26px]' : 'h-7';
  const rows = v8 ? ROWS_V8 : ROWS_V3;
  const head = v8
    ? 'border-b border-[#c9cdd0] bg-[#fafafa] p-0 pt-1 pl-[5px] text-left font-normal text-[#33373a]'
    : 'border-b border-[#bfc3c6] bg-linear-to-b from-[#fbfbfb] to-[#e9ebed] p-0 pt-0.5 pl-1.5 text-left font-bold text-[#55595c]';

  return (
    <table className="h-full w-full table-fixed border-separate border-spacing-0 text-base leading-[22px] font-normal">
      <colgroup>
        <col className={v8 ? 'w-[170px]' : 'w-[178px]'} />
        <col className="w-[102px]" />
        <col />
      </colgroup>
      <thead>
        <tr className="h-7">
          <th aria-label="名称" className={clsx(head, 'border-r border-r-[#d5d8da]')} />
          <th className={clsx(head, 'overflow-hidden border-r border-r-[#d5d8da]')}>
            <span className={clsx('block overflow-hidden whitespace-nowrap', v8 && 'mr-1 mask-r-from-85%')}>
              {v8 ? 'PTC_MASTER' : 'ptc_mate...'}
            </span>
          </th>
          <th className={clsx(head, 'overflow-hidden')}>
            <span className={clsx('block overflow-hidden whitespace-nowrap', v8 && 'mr-1 mask-r-from-80%')}>
              {v8 ? 'PRO_MP_MASS' : 'PRO_MP...'}
            </span>
          </th>
        </tr>
      </thead>
      <tbody>
        <TreeTableRow height={height} row={{ icon: 'cube', label: 'WQW.PRT', depth: 0 }} values={['6063-T5', '0.000']} />
        {rows.map((row) => <TreeTableRow key={row.label} height={height} row={row} />)}
        {v8 ? (
          <tr className="h-3.5">
            <td colSpan={3} className="p-0"><div className="h-0.5 bg-[#66c24a]" /></td>
          </tr>
        ) : null}
        <TreeTableRow height={height} row={EXTRUDE} />
        <tr>
          <td className="border-r border-[#e3e6e8]" />
          <td colSpan={2} />
        </tr>
      </tbody>
    </table>
  );
}

function ScrollBar({ width, thumb, variant }: { width: string; thumb?: boolean; variant: Variant }) {
  const v8 = variant === 'v8';
  const edge = thumb ? 'border-[#b9bcbe]' : 'border-[#d9dcde]';
  const arrow = clsx('flex items-center justify-center bg-[#f3f4f5]', v8 ? 'w-3' : 'w-4');
  const fill = thumb ? '#6a6e70' : '#aaaeb0';

  return (
    <div className={clsx('flex border', edge, width, v8 ? 'h-[15px]' : 'h-[18px]')}>
      <button type="button" aria-label="向左" className={arrow}>
        <svg viewBox="0 0 4 8" className="h-2 w-1"><path d="M4 0v8L0 4z" fill={fill} /></svg>
      </button>
      <div className={clsx('flex flex-1 border-x', edge)}>
        {thumb ? (
          <div className={clsx('flex flex-1 items-center justify-center gap-px', v8 ? 'bg-[#f6f6f7]' : 'mr-4 border border-[#c5c8ca] bg-linear-to-b from-[#e6e7e8] to-white')}>
            {v8 ? null : [0, 1, 2, 3].map((n) => <span key={n} className="h-2 w-0.5 border-r border-[#a9acae]" />)}
          </div>
        ) : null}
      </div>
      <button type="button" aria-label="向右" className={arrow}>
        <svg viewBox="0 0 4 8" className="h-2 w-1"><path d="M0 0v8l4-4z" fill={fill} /></svg>
      </button>
    </div>
  );
}

function TreeTitle({ className }: { className: string }) {
  return (
    <div className={clsx('flex items-center', className)}>
      <h2 className="flex-1 text-base font-medium leading-6 text-[#44484a]">模型树</h2>
      <IconButton name="tools" icon="size-[18px]" />
      <span className="ml-2"><Caret /></span>
      <IconButton name="listDoc" icon="size-5" className="ml-2.5" />
      <span className="ml-2"><Caret /></span>
      <IconButton name="columnsHide" icon="size-5" className="ml-3" />
    </div>
  );
}

/* Graphics area */

function ViewBar({ variant }: { variant: Variant }) {
  const v8 = variant === 'v8';
  const icons = v8
    ? ['refit', 'zoomIn', 'zoomOut', 'repaint', 'shaded', 'hexShape', 'viewMgr', 'orient', 'section', 'perspective', 'dimDisplay']
    : ['refit', 'zoomIn', 'zoomOut', 'repaint', 'shaded', 'savedView', 'viewMgr', 'orient', 'dimDisplay'];
  const menus = ['shaded', 'hexShape', 'savedView', 'dimDisplay'];

  return (
    <div
      role="toolbar"
      aria-label="图形"
      className={clsx(
        'relative flex border',
        v8 ? 'h-9 items-center border-[#8f9396] bg-[#f5f8f9] px-0.5' : 'h-8 border-[#c9cccf] bg-white',
      )}
    >
      {v8 ? null : <span className="w-1 bg-[#eeeff2]" />}
      {icons.map((icon) => (
        <button
          key={icon}
          type="button"
          aria-label={icon}
          className={clsx('relative flex items-center justify-center', v8 ? 'h-7 w-[30px]' : 'w-[31px] border-l border-[#c9cccf]')}
        >
          <Icon name={icon} className="size-5" />
          {menus.includes(icon) ? (
            <svg viewBox="0 0 4 4" className="absolute right-0.5 bottom-0.5 size-1"><path d="M4 0v4H0z" fill="#333" /></svg>
          ) : null}
        </button>
      ))}
      {['annoDisplay', 'spin'].map((icon) => (
        <button
          key={icon}
          type="button"
          aria-label={icon}
          aria-pressed="true"
          className={clsx(
            'flex items-center justify-center border border-[#a9acae]',
            v8 ? 'ml-[3px] h-7 w-7 bg-[#dfe0e3]' : 'ml-0.5 w-[30px] bg-linear-to-b from-[#d9dbdd] to-[#eceded]',
          )}
        >
          <Icon name={icon} className="size-5" />
        </button>
      ))}
      {v8 ? null : <span className="ml-0.5 w-1 bg-[#eeeff2]" />}
    </div>
  );
}

function Csys({ x, y }: { x: number; y: number }) {
  return (
    <g>
      <path d={`M${x} ${y}v-14`} stroke="#40e040" strokeWidth="1.500" />
      <path d={`M${x} ${y}h-14`} stroke="#40e0f0" strokeWidth="1.500" />
      <circle cx={x} cy={y - 14} r="2" fill="#30f030" />
      <circle cx={x - 14} cy={y} r="2" fill="#30e8f8" />
      <circle cx={x} cy={y} r="2.800" fill="#ff3030" />
    </g>
  );
}

function DimLine({ y, x1, x2, gap1, gap2, color, end = color }: {
  y: number;
  x1: number;
  x2: number;
  gap1: number;
  gap2: number;
  color: string;
  end?: string;
}) {
  return (
    <g>
      <path d={`M${x1} ${y}H${gap1}M${gap2} ${y}H${x2}`} stroke={color} strokeOpacity=".6" />
      <path d={`M${x1} ${y}l8-2v4z`} fill={color} />
      <path d={`M${x2} ${y}l-8-2v4z`} fill={end} />
    </g>
  );
}

function Badge({ x, y, upright }: { x: number; y: number; upright?: boolean }) {
  return (
    <g>
      <circle cx={x} cy={y + 1} r="8" fill="#b9a9bb" />
      <circle cx={x} cy={y} r="7.500" fill="#f8f8fa" />
      <path d={upright ? `M${x} ${y - 6}v12` : `M${x - 6} ${y}h12`} stroke="#666" strokeWidth="1.500" />
    </g>
  );
}

function SketchV8() {
  return (
    <svg className="absolute inset-0 h-full w-full font-normal" fill="none" fontSize="23" aria-label="WQW">
      <rect x="403.500" y="348.500" width="1200" height="63" fill="#eec1e9" stroke="#ff9c10" strokeWidth="1.500" />
      <path d="M129 319.500H1600M129 413.500H1600" stroke="#7c5058" />
      <path d="M129.500 320v93" stroke="#b5a9ad" strokeWidth="2" />
      <path d="M0 411.500H403" stroke="#9ccbcb" strokeWidth="1.500" strokeDasharray="4 4" />
      <path d="M131.500 319V413" stroke="#a88088" />
      <path d="M131.500 0V2000" stroke="#00a3a3" strokeDasharray="4 4" />
      <path d="M131.500 290v50" stroke="#39006a" strokeDasharray="4 4" strokeDashoffset="4" />
      <DimLine y={294.500} x1={132} x2={403} gap1={217} gap2={321} color="#39006a" />
      <path d="M403.500 289v46" stroke="#39006a" />
      <DimLine y={339.500} x1={132} x2={403} gap1={216} gap2={319} color="#10b8f0" end="#10a030" />
      <path d="M403.500 335v12" stroke="#20c8f0" />
      <path d="M404 397.500H1600" stroke="#aebfe8" strokeWidth="1.500" />
      <rect x="429" y="380" width="90" height="34" fill="#e8e0ec" />
      <rect x="538" y="370" width="60" height="34" fill="#e8e0ec" />
      <text x="269" y="303" textAnchor="middle" fill="#39006a">(116.00)</text>
      <text x="267" y="348" textAnchor="middle" fill="#00bdf0">116.00</text>
      <text x="474" y="406" textAnchor="middle" fill="#00bdf0">79.39</text>
      <text x="553" y="396" fill="#00bdf0">26</text>
      <text x="131" y="320" fill="#7c5058">FRONT</text>
      <text x="129" y="413" fill="#7c5058">RIGHT</text>
      <Csys x={360.500} y={366.500} />
      <Badge x={422} y={369} upright />
      <Badge x={497} y={366} />
      <Badge x={572} y={365} upright />
      <Badge x={404} y={393} />
      <circle cx="402" cy="393" r="2" fill="#7fc4e4" stroke="#4c8ca5" />
      <Badge x={532} y={393} />
    </svg>
  );
}

function SketchV3() {
  return (
    <svg className="absolute inset-0 h-full w-full font-normal" fill="none" fontSize="23" aria-label="WQW">
      <rect x="464" y="368" width="1200" height="99" fill="#f8ecc0" />
      <path d="M464 368.500H1600" stroke="#f09410" />
      <path d="M464.500 368v98" stroke="#ffb088" strokeWidth="1.500" />
      <path d="M133 362.500H1600M133 470.500H1600" stroke="#a68a7c" />
      <path d="M133.500 362v109M136 362v106" stroke="#9a6a3a" />
      <path d="M136 467.500H464" stroke="#9a6a3a" strokeWidth="3" />
      <path d="M464 467H1600" stroke="#e08420" strokeWidth="3" />
      <path d="M0 467.500H464" stroke="#48dede" strokeDasharray="5 5" />
      <path d="M136.500 4V2000" stroke="#28dede" strokeDasharray="5 5" />
      <path d="M136.500 281v52" stroke="#0000e0" strokeDasharray="5 5" strokeDashoffset="3" />
      <path d="M136.500 339v24" stroke="#0098cc" />
      <DimLine y={286.500} x1={137} x2={464} gap1={243} gap2={347} color="#0000e8" />
      <path d="M464.500 281v57" stroke="#8888ff" />
      <DimLine y={340.500} x1={137} x2={464} gap1={249} gap2={351} color="#0098cc" end="#223" />
      <path d="M464.500 338v27" stroke="#70b0e0" />
      <path d="M465 450.500h38" stroke="#0098cc" />
      <path d="M465 450.500l8-2v4z" fill="#0098cc" />
      <text x="294" y="295" textAnchor="middle" fill="#0000e8">(141.00)</text>
      <text x="299" y="349" textAnchor="middle" fill="#0098cc">141.00</text>
      <text x="136" y="363" fill="#9a6a38">FRONT</text>
      <text x="134" y="471" fill="#9a6a38">RIGHT</text>
      <text x="465" y="427" fill="#0000e0">V</text>
      <text x="517" y="459" fill="#0098cc">100.69</text>
      <circle cx="464.500" cy="467.500" r="3.500" stroke="#1010c0" />
      <Csys x={418} y={417} />
    </svg>
  );
}

/* Left window */

const TABS_V8: [string, string][] = [
  ['模型', 'w-20'],
  ['分析', 'w-20'],
  ['实时仿真', 'w-[70px]'],
  ['注释', 'w-20'],
  ['工具', 'w-[82px]'],
  ['视图', 'w-20'],
  ['柔性建模', 'w-[69px]'],
  ['应用程序', 'w-[69px]'],
  ['公用', 'w-[47px]'],
];

const ITALIC = 'italic';

function WindowV8() {
  return (
    <section className="flex min-w-0 flex-col overflow-hidden bg-[#f5f9fa]">
      <header className="flex h-[25px] shrink-0 items-center bg-linear-to-b from-[#c9cfcf] via-[#d9dfdf] to-[#d9dfdf] pb-1">
        <div className="flex w-[79px] items-center pl-1 text-[#565c5e]">
          <Icon name="cube" />
          <span className="ml-1 text-lg leading-5 font-normal">creo</span>
          <span className="ml-px size-[3px] self-start rounded-full bg-[#565c5e]" />
        </div>
        <QuickAccess />
        <h1 className="ml-0.5 flex-1 whitespace-nowrap text-lg leading-5 text-[#3b4042]">
          WQW (活动的) - Creo Parametric 8.0
        </h1>
        <div className="flex items-center gap-4 pr-3 text-[#666]">
          <button type="button" aria-label="最小化" className="flex size-2.5 items-end"><span className="h-0.5 w-2.5 bg-[#777]" /></button>
          <button type="button" aria-label="最大化" className="h-2.5 w-2.5 border border-t-[3px] border-[#777]" />
          <button type="button" aria-label="关闭">
            <svg viewBox="0 0 10 10" className="size-2.5"><path d="m1 1 8 8M9 1 1 9" stroke="#666" strokeWidth="2" /></svg>
          </button>
        </div>
      </header>

      <nav className="flex h-[34px] shrink-0 bg-[#3f4648] text-[17px] leading-6 whitespace-nowrap text-white">
        <button type="button" className="w-[70px] shrink-0 bg-linear-to-b from-[#66cf45] to-[#4ea52f] pr-1">文件</button>
        {TABS_V8.map(([label, width]) => (
          <button key={label} type="button" className={clsx('shrink-0', width)}>{label}</button>
        ))}
        <button type="button" className={clsx('w-[47px] shrink-0 bg-[#6c7a7d] text-[19px] text-[#d6dfe0]', ITALIC)}>拉伸</button>
        <button type="button" className={clsx('ml-0.5 w-[82px] shrink-0 bg-[#f7f9fb] text-[19px] text-[#4b5052]', ITALIC)}>草绘</button>
        <div className="flex flex-1 items-center justify-between px-1.5 pb-1">
          <button type="button" aria-label="最小化功能区">
            <svg viewBox="0 0 10 5" className="h-[5px] w-2.5"><path d="M0 5h10L5 0z" fill="#e5e8e8" /></svg>
          </button>
          <button type="button" aria-label="搜索">
            <svg viewBox="0 0 12 12" className="size-3" fill="none" stroke="#f0f2f2" strokeWidth="2"><circle cx="7" cy="4.500" r="3.300" /><path d="M4.500 7 1 11" /></svg>
          </button>
          <button type="button" aria-label="学习" className="flex items-center gap-2">
            <svg viewBox="0 0 14 10" className="h-2.5 w-3.5" fill="#f0f2f2"><path d="M7 0 0 3l7 3 7-3zM3 6v2.500c2 2 6 2 8 0V6L7 7.500zM0 3v5h1V4z" /></svg>
            <Caret white />
          </button>
          <button type="button" aria-label="帮助" className="text-base font-bold leading-5">?</button>
        </div>
      </nav>

      <Ribbon variant="v8" />

      <div className="flex min-h-0 flex-1">
        <aside className="flex w-[385px] shrink-0 flex-col border-r-[3px] border-[#d9dfdf]">
          <div className="flex h-[31px] shrink-0 items-center bg-[#d9dfdf] text-base leading-6 text-[#4b5052]">
            <button type="button" className="flex h-full w-[84px] items-center gap-1 bg-[#f8fafc] pl-1">
              <Icon name="tree" className="size-[18px]" />
              模型树
            </button>
            <button type="button" className="ml-2 flex items-center gap-1">
              <Icon name="folders" className="size-[18px]" />
              文件夹浏览器
            </button>
            <button type="button" className="ml-4 flex items-center gap-1.5">
              <Icon name="favorite" className="size-[18px]" />
              收藏夹
            </button>
          </div>
          <TreeTitle className="h-[30px] shrink-0 pr-2 pl-6" />
          <label className="flex h-[33px] shrink-0 items-center pl-2">
            <Icon name="funnel" />
            <span className="ml-1 flex h-full w-[306px] items-center border border-[#a3abae] bg-white pr-1.5">
              <input type="text" aria-label="筛选" className="h-full min-w-0 flex-1 px-1 outline-none" />
              <svg viewBox="0 0 8 8" className="size-2"><path d="m0 0 8 8M8 0 0 8" stroke="#9a9d9f" /></svg>
            </span>
            <span className="ml-1.5"><Caret /></span>
            <svg viewBox="0 0 12 12" className="ml-3 size-3"><path d="M6 0v12M0 6h12" stroke="#a3a7a9" strokeWidth="3" /></svg>
          </label>
          <div className="min-h-0 flex-1 px-1 pt-1 text-[#55595b]">
            <TreeTable variant="v8" />
          </div>
          <div className="mb-1.5 flex shrink-0 pl-1">
            <ScrollBar variant="v8" width="w-[170px]" />
            <ScrollBar variant="v8" thumb width="w-[203px]" />
          </div>
        </aside>
        <div className="relative flex flex-1 items-start justify-center overflow-hidden bg-[#e8e9ed] pt-[7px]">
          <SketchV8 />
          <ViewBar variant="v8" />
        </div>
      </div>

      <footer className="flex h-[35px] shrink-0 items-start border-t border-[#b5bcbf] pt-[5px] text-[#4b5052]">
        <IconButton name="paneToggle" className="mt-1.5 ml-0.5 h-6 w-[22px] border border-[#b5b8ba] bg-[#dfe1e3]" />
        <IconButton name="globe" className="mt-1.5 ml-1.5 h-6 w-[18px]" />
        <IconButton name="screen" className="mt-1.5 ml-2 h-6 w-[18px]" />
        <span className="mt-1.5 ml-2.5 h-6 w-px bg-[#b5bcbf]" />
        <p className="mt-0.5 flex flex-1 items-center gap-1.5 overflow-hidden pl-[5px] text-[15px] leading-5 whitespace-nowrap">
          <span className="mb-1 size-[5px] rounded-full bg-[#14688c]" />
          当约束处于活动状态时，可通过单击右键在锁定/禁用/启用约束
        </p>
        <span className="mr-1 h-7 w-px bg-[#b5bcbf]" />
        <span className="mr-0.5 h-7 w-px bg-[#b5bcbf]" />
        <button type="button" aria-label="查找" className="flex h-6 w-[42px] border border-[#c9cccf]">
          <span className="flex h-full w-7 items-center justify-center"><Icon name="binoculars" /></span>
          <span className="flex h-full flex-1 items-center justify-center bg-[#dadcde]"><Caret light /></span>
        </button>
        <span className="ml-0.5 h-7 w-px bg-[#b5bcbf]" />
        <Combo label="所有草绘" className="ml-[126px] h-7 w-[225px]" />
        <svg viewBox="0 0 12 12" className="mx-[3px] mt-4 size-3" stroke="#b0b5b7" fill="none"><path d="M0 12 12 0M4 12l8-8M8 12l4-4" /></svg>
      </footer>
    </section>
  );
}

function Combo({ label, className }: { label: string; className: string }) {
  return (
    <div className={clsx('flex border border-[#a9acae] bg-[#f7f7f8] text-base', className)}>
      <select aria-label="选择过滤器" className="min-w-0 flex-1 appearance-none bg-transparent pt-0.5 pl-[7px] leading-6 outline-none">
        <option>{label}</option>
      </select>
      <span className="flex w-[15px] items-center justify-center border-l border-[#a9acae]"><Caret /></span>
    </div>
  );
}

/* Right window */

const TABS_V3 = ['模型', '分析', '注释', '渲染', '工具', '视图', '柔性建模', '应用程序'];

function WindowV3() {
  return (
    <section className="relative flex min-w-0 flex-col overflow-hidden border-t-4 border-r-4 border-b-4 border-[#c7cdd3] bg-[#fbfbfb]">
      <header className="flex h-9 shrink-0 items-center pb-1">
        <span className="ml-2 flex size-4 items-center justify-center border border-[#3b4245] bg-white">
          <span className="size-2.5 border-b-2 border-l-2 border-[#cfd3d5] bg-[#0f9be0]" />
        </span>
        <span className="mr-0.5 ml-1 h-6 w-px bg-[#c9cccf]" />
        <QuickAccess />
        <h1 className="flex-1 whitespace-nowrap text-[17px] leading-6 font-normal text-[#b0b3b5] font-['Liberation_Mono','Noto_Sans_CJK_SC',monospace]">
          WQW (活动的) - Creo Parametric 3.0
        </h1>
        <div className="flex items-center gap-4 pr-2">
          <button type="button" aria-label="最小化" className="mt-1 h-1 w-2.5 border border-[#a9acae]" />
          <button type="button" aria-label="最大化" className="flex h-[9px] w-[11px] items-center justify-center border border-[#a9acae]">
            <span className="h-[5px] w-[7px] border border-[#a9acae]" />
          </button>
          <button type="button" aria-label="关闭">
            <svg viewBox="0 0 16 16" className="size-4" fill="#fff" stroke="#a9acae"><path d="M2.500 3.500h3.300l2.200 2.700 2.200-2.700h3.300L9.900 8l3.600 4.500h-3.300L8 9.800l-2.200 2.700H2.500L6.100 8z" /></svg>
          </button>
        </div>
      </header>

      <nav className="mr-1 flex h-[30px] shrink-0 items-end border-b border-[#c5c8cb] text-[17px] leading-6 font-bold whitespace-nowrap text-[#6b6e71]">
        <button type="button" className="flex h-full w-[59px] items-center gap-1 border-t border-r border-[#c5c8cb] bg-[#eeeff2] pl-2">
          文件
          <Caret />
        </button>
        <div className="ml-2 flex h-full divide-x divide-[#dcdfe1] border border-b-0 border-[#c5c8cb] bg-[#eeeff2]">
          {TABS_V3.map((label, i) => (
            <button key={label} type="button" className={i === 0 ? 'pr-[11px] pl-2.5' : 'px-[11px]'}>{label}</button>
          ))}
        </div>
        <button type="button" className={clsx('ml-[7px] h-full w-[60px] border-t border-[#c5c8cb] bg-[#aee6ff]', ITALIC)}>拉伸</button>
        <button type="button" className={clsx('-mb-px h-[34px] w-[60px] border border-b-0 border-[#c5c8cb] bg-[#fbfbfb] text-[#333]', ITALIC)}>草绘</button>
        <div className="flex h-full flex-1 items-center justify-end gap-2 pr-1 pb-1.5">
          <button type="button" aria-label="最小化功能区">
            <svg viewBox="0 0 12 8" className="mr-1 h-2 w-3" fill="none" stroke="#9a9d9f"><path d="M1 7h3l2-2 2 2h3L6 1z" /></svg>
          </button>
          <button type="button" aria-label="搜索">
            <svg viewBox="0 0 16 16" className="size-4" fill="none" stroke="#333"><circle cx="9" cy="6.500" r="5" strokeWidth="2" /><path d="m5.500 10-4 5" strokeWidth="2.500" /></svg>
          </button>
          <button type="button" aria-label="学习" className="flex items-center gap-2">
            <svg viewBox="0 0 16 16" className="size-4"><circle cx="8" cy="8" r="8" fill="#333" /><path d="M8 4 2.500 6.500 8 9l5.500-2.500zM5 9v2c2 1.500 4 1.500 6 0V9l-3 1.300z" fill="#fff" /></svg>
            <Caret />
          </button>
          <button type="button" aria-label="帮助" className="flex size-4 items-center justify-center rounded-full bg-[#333] text-sm leading-4 text-white">?</button>
        </div>
      </nav>

      <Ribbon variant="v3" />

      <div className="mr-1 flex min-h-0 flex-1">
        <aside className="flex w-[374px] shrink-0 flex-col pt-3 pb-3">
          <div className="flex h-[30px] shrink-0 items-end">
            <button type="button" aria-label="模型树" className="-mb-px flex h-[30px] w-[30px] items-center justify-center border-t border-r border-[#c5c8cb] bg-[#fbfbfb]">
              <Icon name="tree" className="size-[18px]" />
            </button>
            <button type="button" aria-label="文件夹浏览器" className="flex h-[29px] w-[30px] items-center justify-center border-t border-r border-[#c5c8cb] bg-[#f0f1f3]">
              <Icon name="folders" className="size-[18px]" />
            </button>
            <button type="button" aria-label="收藏夹" className="flex h-[29px] w-[30px] items-center justify-center border-t border-r border-[#c5c8cb] bg-[#f0f1f3]">
              <Icon name="favorite" className="size-[18px]" />
            </button>
          </div>
          <div className="flex min-h-0 flex-1 flex-col border-t border-r-[3px] border-b-2 border-[#c5c8ca]">
            <TreeTitle className="h-[31px] shrink-0 border-b border-[#c5c8ca] pr-1 pl-5" />
            <div className="min-h-0 flex-1 pt-1.5 pl-2 text-[#4b4f52]">
              <TreeTable variant="v3" />
            </div>
            <div className="mb-px flex shrink-0 pl-2">
              <ScrollBar variant="v3" width="w-[178px]" />
              <ScrollBar variant="v3" thumb width="w-[184px]" />
            </div>
          </div>
        </aside>
        <div className="relative flex flex-1 items-start justify-center overflow-hidden pt-[7px]">
          <SketchV3 />
          <ViewBar variant="v3" />
        </div>
      </div>

      <footer className="flex h-[43px] shrink-0 items-center border-t-2 border-[#949799] bg-[#eeeff2] text-[#4b4f52]">
        <IconButton name="tree" className="mt-2 ml-0.5 h-[22px] w-[22px] border border-[#a9acae] bg-[#e0e2e4]" />
        <IconButton name="globe" className="mt-2 ml-1 h-[22px] w-[22px] border border-[#c9cccf]" />
        <span className="mt-1 ml-2.5 h-6 w-px bg-[#d0d3d5]" />
        <p className="mb-2 ml-1.5 flex w-[358px] items-center gap-1 overflow-hidden text-[15px] leading-5 whitespace-nowrap">
          <span className="mb-1 size-[5px] shrink-0 rounded-full bg-[#14688c]" />
          当约束处于活动状态时，可通过单击右键在锁定/禁用
        </p>
        <span className="h-9 w-px bg-[#d0d3d5]" />
        <span className="ml-[30px] h-9 w-px bg-[#d0d3d5]" />
        <span className="ml-1.5 flex w-[30px] items-center gap-px">
          <span className="size-2.5 rounded-full bg-[#b9bcbe]" />
          <span className="size-1.5 rounded-full bg-[#d5d8da]" />
          <span className="size-1.5 rounded-full bg-[#d5d8da]" />
        </span>
        <span className="h-9 w-px bg-[#d0d3d5]" />
        <svg viewBox="0 0 12 16" className="ml-1.5 h-4 w-3" fill="#a9acae"><path d="M0 0h2v16H0zM2 1l10 3.500L2 8z" /></svg>
        <span className="ml-[22px] h-9 w-px bg-[#d0d3d5]" />
        <IconButton name="binoculars" className="mx-0.5 h-[33px] w-10 rounded-sm border border-[#d0d3d5]" />
        <span className="h-9 w-px bg-[#d0d3d5]" />
        <Combo label="全部" className="mr-[18px] mb-1 ml-auto h-7 w-[224px] border-[#c5c8cb]" />
      </footer>
      <span className="pointer-events-none absolute inset-y-0 left-0 w-2 bg-linear-to-r from-black/15 to-transparent" />
    </section>
  );
}

/* Taskbar */

const TASKS: { label: string; icon: ReactNode; active?: boolean }[] = [
  {
    label: 'Autodesk AutoCA...',
    icon: (
      <svg viewBox="0 0 24 24" className="size-6 shrink-0">
        <path d="M0 0h24v24H0z" fill="#fbe9e2" />
        <path d="M3 21 10 2h4l7 19h-5l-1.500-5H9l-2 5zM10 13h4L12 7z" fill="#c4202b" />
        <path d="m13.500 16 7.500 5h-5z" fill="#7d1118" />
      </svg>
    ),
  },
  {
    label: 'WQW (活动的) - C...',
    icon: (
      <svg viewBox="0 0 24 24" className="size-6 shrink-0">
        <path d="M1 1h22v22H1z" fill="#fff" />
        <path d="M4 3h5v15h11v3H4z" fill="#cfd0cc" stroke="#888" strokeWidth=".6" />
        <path d="M10 3h10v13H10z" fill="#0f9be0" stroke="#223" strokeWidth=".8" />
      </svg>
    ),
  },
  {
    label: 'WQW (活动的) - C...',
    active: true,
    icon: (
      <svg viewBox="0 0 24 24" className="size-6 shrink-0">
        <path d="M1 4 4 1h19v18l-3 4H1z" fill="#5cb0cc" />
        <path d="M1 4h19v18H1z" fill="#a5e4fa" />
        <path d="m1 4 3-3h19l-3 3z" fill="#d0f2fd" />
      </svg>
    ),
  },
  {
    label: '二维草绘里面参考...',
    icon: (
      <svg viewBox="0 0 24 24" className="size-6 shrink-0">
        <circle cx="12" cy="12" r="11.500" fill="#fff" />
        <circle cx="12" cy="12" r="10" fill="#3c8bea" />
        <path d="M17 5.500C11 3 6 6.500 7.500 10c2 3.500 8.500 3 8 7-.5 2.500-4 4-8 2.500" fill="none" stroke="#fff" strokeWidth="3" />
      </svg>
    ),
  },
  {
    label: '微信',
    icon: (
      <svg viewBox="0 0 24 24" className="size-6 shrink-0">
        <path d="M9 2c5 0 9 3 9 7s-4 7-9 7c-1 0-2 0-3-.5L2.500 17l1-3C1.500 13 0 11 0 9c0-4 4-7 9-7z" fill="#2fdc6b" />
        <path d="M16.500 9c4 0 7.500 2.500 7.500 6 0 2-1 3.500-2.500 4.500l.5 2.500-3-1.500c-5 1-10-1.500-10-5.500 0-3.500 3.500-6 7.500-6z" fill="#eef0f0" />
        <g fill="#14602f"><circle cx="6" cy="7" r="1.200" /><circle cx="12" cy="7" r="1.200" /><circle cx="14" cy="14" r="1" /><circle cx="19" cy="14" r="1" /></g>
      </svg>
    ),
  },
];

function Penguin({ badge }: { badge?: boolean }) {
  return (
    <svg viewBox="0 0 16 16" className="size-4" aria-hidden="true">
      <ellipse cx="8" cy="9" rx="6" ry="6.500" fill="#111" />
      <circle cx="8" cy="4.500" r="4" fill="#111" />
      <ellipse cx="8" cy="11" rx="4" ry="4" fill="#fff" />
      <circle cx="6.500" cy="3.500" r="1.100" fill="#fff" />
      <circle cx="9.500" cy="3.500" r="1.100" fill="#fff" />
      <path d="M5 5.500h6L8 7.500z" fill="#f5a623" />
      <path d="M2.500 7.500c3 2 8 2 11 0v2c-3 2-8 2-11 0z" fill="#e0202b" />
      <path d="M2 15h5M9 15h5" stroke="#f5a623" strokeWidth="2" />
      {badge ? <circle cx="12" cy="12" r="4" fill="#f79a3c" /> : null}
      {badge ? <path d="M10 11h4M10 13h4" stroke="#fff" /> : null}
    </svg>
  );
}

function Taskbar() {
  return (
    <footer className="relative flex h-10 shrink-0 overflow-hidden bg-[#586567] text-xs font-normal text-black">
      <span className="pointer-events-none absolute top-0 left-0 h-3 w-1/2 bg-linear-to-b from-[#b9bebe] to-transparent" />
      <span className="pointer-events-none absolute top-1 left-[686px] h-12 w-6 bg-[#7a0606] blur-[5px]" />
      <div className="relative flex items-center">
        <button type="button" aria-label="开始" className="flex w-12 justify-center">
          <svg viewBox="0 0 16 16" className="size-4"><path d="M0 2.500 7 1.500v6H0zM8 1.300 16 0v7.500H8zM0 8.500h7v6l-7-1zM8 8.500h8V16l-8-1.300z" /></svg>
        </button>
        <button type="button" aria-label="搜索" className="flex w-12 justify-center">
          <svg viewBox="0 0 16 16" className="size-4" fill="none" stroke="#000" strokeWidth="1.300"><circle cx="10" cy="6" r="5" /><path d="m6.500 9.500-6 6" /></svg>
        </button>
        <button type="button" aria-label="计算器" className="flex w-[52px] justify-center">
          <svg viewBox="0 0 18 22" className="h-[22px] w-[18px]">
            <path d="M0 0h18v22H0z" fill="#707c85" />
            <path d="M1.500 1h15v4.500h-15z" fill="#3ec8f0" />
            <path d="M2 7.500h3.500V11H2zM7 7.500h3.500V11H7zM2 12.500h3.500V16H2zM7 12.500h3.500V16H7zM2 17.500h3.500V21H2zM7 17.500h3.500V21H7zM12 7.500h4V11h-4z" fill="#dfe5e8" />
            <path d="M12 12.500h4V21h-4z" fill="#154a86" />
          </svg>
        </button>
      </div>
      <div className="relative flex">
        {TASKS.map(({ label, icon, active }, i) => (
          <button
            key={i}
            type="button"
            className={clsx(
              'flex items-center gap-1 overflow-hidden whitespace-nowrap',
              active ? 'w-40 bg-[#b9bdbd] pl-2.5' : 'mx-1 w-[153px] border-b-2 border-[#b9bdbd] pt-0.5 pl-1.5',
            )}
          >
            {icon}
            {label}
          </button>
        ))}
      </div>
      <div className="relative ml-auto flex items-center">
        <button type="button" aria-label="显示隐藏的图标" className="mr-3">
          <svg viewBox="0 0 12 8" className="h-2 w-3" fill="none" stroke="#000" strokeWidth="1.300"><path d="m0 7 6-6 6 6" /></svg>
        </button>
        <div className="flex items-center gap-2">
          <svg viewBox="0 0 16 16" className="size-4"><ellipse cx="6" cy="6" rx="6" ry="5.500" fill="#2fdc6b" /><ellipse cx="11.500" cy="11" rx="4.500" ry="4" fill="#eef0f0" /></svg>
          <Penguin />
          <Penguin badge />
          <svg viewBox="0 0 16 16" className="size-4" fill="none" stroke="#000" strokeWidth="1.300"><path d="M4 3h11.500v8H4zM8 15h6M10.500 11v4M.5 1h4v4h-4zM2.500 5v10H5" /></svg>
          <svg viewBox="0 0 16 16" className="size-4"><path d="M1 5.500h2l4-4v13l-4-4H1z" fill="none" stroke="#000" strokeWidth="1.300" /><circle cx="12" cy="11.500" r="4.300" fill="#e0202b" /><path d="m10.300 9.800 3.400 3.400M13.700 9.800l-3.400 3.400" stroke="#fff" /></svg>
          <svg viewBox="0 0 16 16" className="size-4"><circle cx="8" cy="8" r="7" fill="#8f9597" stroke="#333" /><path d="m5 5 6 6M11 5l-6 6" stroke="#111" strokeWidth="1.800" /></svg>
        </div>
        <span className="mr-1 ml-4 flex size-4 items-center justify-center bg-[#2f86f0] text-[13px] leading-4 font-bold text-white">五</span>
        <div className="ml-4 flex w-[98px] flex-col items-center leading-5">
          <span>8:56</span>
          <span className="whitespace-nowrap">2022/5/5 星期四</span>
        </div>
        <svg viewBox="0 0 16 16" className="mr-[25px] ml-4 size-4" fill="none" stroke="#000" strokeWidth="1.200"><path d="M.6 1h14.800v11H12l-2.500 3V12H.6z" /></svg>
      </div>
    </footer>
  );
}

function Watermark() {
  return (
    <div className="pointer-events-none absolute right-6 bottom-1.5 flex w-[162px] flex-col items-center">
      <div className="relative mb-0.5 flex w-full justify-between text-[38px] leading-9 font-light italic">
        <span className="text-[#ff6a35]">野火</span>
        <span className="text-black">论坛</span>
        <svg viewBox="0 0 16 42" className="absolute -top-5 left-[64px] h-[42px] w-4" aria-hidden="true">
          <path d="M4 0c9 8 15 20 10 30-2 4-5 8-9 11-2 1-4-1-3-3 3-5 7-9 6-17C10 30 6 34 3 36c6-11 9-24 1-36z" fill="#ff6a35" />
        </svg>
      </div>
      <span className="text-[17px] leading-5 text-[#a3a8aa] italic font-['Liberation_Sans',sans-serif]">www.proewildfire.cn</span>
    </div>
  );
}

export default function App() {
  return (
    <div className="relative flex h-screen flex-col overflow-hidden bg-[#a5a5a5] font-['Noto_Sans','Noto_Sans_CJK_SC',sans-serif] font-[350]">
      <main className="grid min-h-0 flex-1 grid-cols-[964fr_952fr] gap-1">
        <WindowV8 />
        <WindowV3 />
      </main>
      <Taskbar />
      <Watermark />
    </div>
  );
}
